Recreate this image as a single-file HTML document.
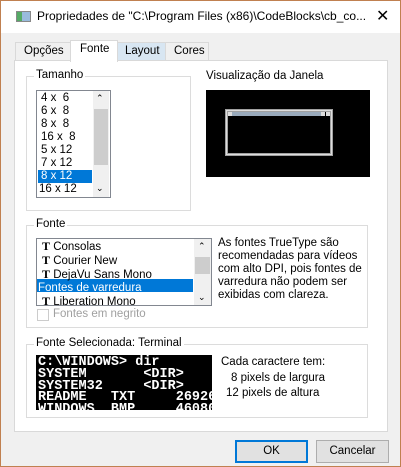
<!DOCTYPE html><html><head><style>
*{margin:0;padding:0;box-sizing:border-box}
body{width:401px;height:467px;overflow:hidden;background:#f0f0f0;font-family:"Liberation Sans",sans-serif;font-size:11.5px;color:#000;position:relative}
.a{position:absolute}
.grp{position:absolute;border:1px solid #dcdcdc}
.lbl{position:absolute;background:#f0f0f0;padding:0 2px;white-space:nowrap}
.mono{font-family:"Liberation Mono",monospace;font-weight:bold;color:#fff;font-size:13.5px;line-height:11.8px;white-space:pre}
</style></head><body>
<div class="a" style="left:0;top:0;width:401px;height:33px;background:#fff"></div>
<div class="a" style="left:0;top:0;width:401px;height:467px;border:1px solid #c08050"></div>
<div class="a" style="left:16px;top:11px;width:15px;height:11px;border:1px solid #888;background:linear-gradient(90deg,#5a6 0 40%,#9bd 40%)"></div>
<div class="a" style="left:37px;top:9px;font-size:12px;white-space:nowrap">Propriedades de "C:\Program Files (x86)\CodeBlocks\cb_co...</div>
<div class="a" style="left:376px;top:6px;font-size:16px">✕</div>
<!-- tabs -->
<div class="a" style="left:15px;top:42px;width:56px;height:19px;border:1px solid #d9d9d9;border-bottom:none"></div>
<div class="a" style="left:24px;top:45px">Opções</div>
<div class="a" style="left:70px;top:40px;width:48px;height:22px;border:1px solid #d9d9d9;border-bottom:none;background:#fff;z-index:2"></div>
<div class="a" style="left:80px;top:43px;z-index:3">Fonte</div>
<div class="a" style="left:117px;top:42px;width:49px;height:19px;border:1px solid #d9d9d9;background:#d8e6f2"></div>
<div class="a" style="left:125px;top:45px">Layout</div>
<div class="a" style="left:165px;top:42px;width:44px;height:19px;border:1px solid #d9d9d9"></div>
<div class="a" style="left:174px;top:45px">Cores</div>
<div class="a" style="left:14px;top:60px;width:374px;height:372px;border:1px solid #d9d9d9;background:#fff"></div>
<!-- Tamanho -->
<div class="grp" style="left:26px;top:76px;width:165px;height:135px"></div>
<div class="lbl" style="left:34px;top:69px;background:#fff">Tamanho</div>
<div class="a" style="left:36px;top:90px;width:75px;height:108px;border:1px solid #828790;background:#fff"></div>
<div class="a" style="left:93px;top:91px;width:16px;height:106px;background:#f0f0f0"></div>
<div class="a" style="left:94px;top:109px;width:14px;height:56px;background:#cdcdcd"></div>
<div class="a" style="left:96px;top:93px;font-size:9px">⌃</div>
<div class="a" style="left:96px;top:183px;font-size:9px">⌄</div>
<div class="a" style="left:38px;top:170px;width:54px;height:13px;background:#0078d7"></div>
<div class="a" style="left:41px;top:92px;line-height:13px;white-space:pre;font-size:11.5px">4 x  6
6 x  8
8 x  8
16 x  8
5 x 12
7 x 12
<span style="color:#fff">8 x 12</span>
</div>
<div class="a" style="left:39px;top:183px;font-size:11.5px">16 x 12</div>
<!-- preview -->
<div class="a" style="left:206px;top:70px;background:#fff">Visualização da Janela</div>
<div class="a" style="left:206px;top:90px;width:164px;height:87px;background:#000"></div>
<div class="a" style="left:225px;top:109px;width:108px;height:47px;border:3px solid #a0a0a0;outline:1px solid #ddd;outline-offset:-2px"></div>
<div class="a" style="left:232px;top:112px;width:89px;height:4px;background:#9ab"></div>
<div class="a" style="left:228px;top:112px;width:4px;height:4px;background:#ddd"></div>
<div class="a" style="left:321px;top:112px;width:4px;height:4px;background:#ddd"></div>
<div class="a" style="left:326px;top:112px;width:4px;height:4px;background:#ddd"></div>
<!-- Fonte group -->
<div class="grp" style="left:26px;top:225px;width:342px;height:103px"></div>
<div class="lbl" style="left:34px;top:218px;background:#fff">Fonte</div>
<div class="a" style="left:36px;top:238px;width:176px;height:68px;border:1px solid #828790;background:#fff"></div>
<div class="a" style="left:194px;top:239px;width:17px;height:66px;background:#f0f0f0"></div>
<div class="a" style="left:195px;top:257px;width:15px;height:17px;background:#cdcdcd"></div>
<div class="a" style="left:198px;top:241px;font-size:9px">⌃</div>
<div class="a" style="left:198px;top:292px;font-size:9px">⌄</div>
<div class="a" style="left:37px;top:279px;width:156px;height:13px;background:#0078d7"></div>
<div class="a" style="left:42px;top:240px;line-height:13px;white-space:pre"><b style="font-family:'Liberation Serif',serif;font-size:12px">T</b> Consolas
<b style="font-family:'Liberation Serif',serif;font-size:12px">T</b> Courier New
<b style="font-family:'Liberation Serif',serif;font-size:12px">T</b> DejaVu Sans Mono
<span style="color:#fff;margin-left:-4px">Fontes de varredura</span>
<b style="font-family:'Liberation Serif',serif;font-size:12px">T</b> Liberation Mono</div>
<div class="a" style="left:218px;top:237px;line-height:13px;width:150px">As fontes TrueType são recomendadas para vídeos com alto DPI, pois fontes de varredura não podem ser exibidas com clareza.</div>
<div class="a" style="left:37px;top:309px;width:12px;height:12px;border:1px solid #ccc;background:#fff"></div>
<div class="a" style="left:53px;top:308px;color:#a0a0a0">Fontes em negrito</div>
<!-- selected -->
<div class="grp" style="left:26px;top:344px;width:342px;height:74px"></div>
<div class="lbl" style="left:34px;top:337px;background:#fff">Fonte Selecionada: Terminal</div>
<div class="a mono" style="left:36px;top:355px;width:176px;height:55px;background:#000;overflow:hidden;padding:2px 0 0 2px">C:\WINDOWS&gt; dir
SYSTEM       &lt;DIR&gt;
SYSTEM32     &lt;DIR&gt;
README   TXT     26926
WINDOWS  BMP     46080</div>
<div class="a" style="left:221px;top:356px">Cada caractere tem:</div>
<div class="a" style="left:231px;top:372px">8 pixels de largura</div>
<div class="a" style="left:226px;top:387px">12 pixels de altura</div>
<!-- buttons -->
<div class="a" style="left:235px;top:440px;width:73px;height:23px;border:2px solid #0078d7;background:#e1e1e1;text-align:center;line-height:19px">OK</div>
<div class="a" style="left:316px;top:440px;width:73px;height:23px;border:1px solid #adadad;background:#e1e1e1;text-align:center;line-height:21px">Cancelar</div>
</body></html>
